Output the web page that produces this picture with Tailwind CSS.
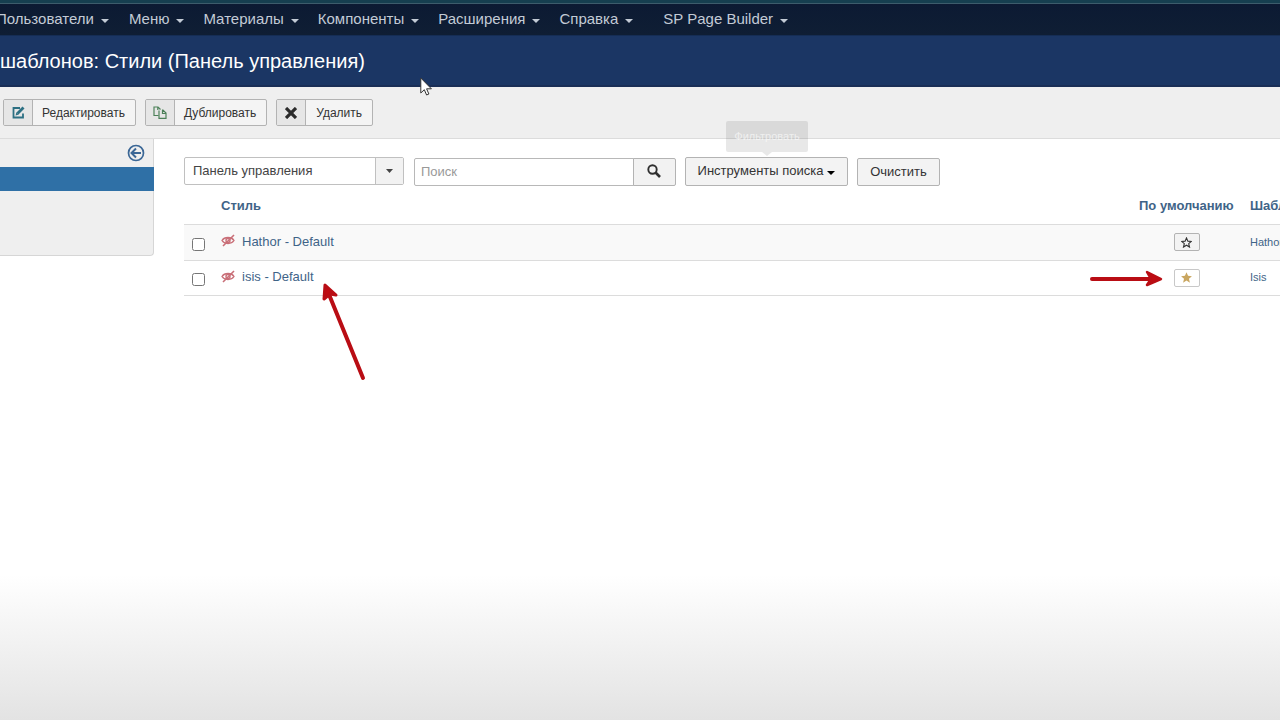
<!DOCTYPE html>
<html lang="ru">

<head>
  <meta charset="UTF-8">
  <meta name="viewport" content="width=device-width, initial-scale=1.0">
  <title>Менеджер шаблонов: Стили (Панель управления)</title>
  <script src="https://cdn.jsdelivr.net/npm/@tailwindcss/browser@4"></script>
</head>

<body class="relative flex min-h-screen flex-col overflow-hidden bg-white font-['Liberation_Sans',Arial,sans-serif] text-[13px] text-[#333]">
  <!-- Top menu -->
  <div class="h-1 border-b border-[#3d5c6c] bg-[#163f50]"></div>
  <nav class="flex h-[31px] items-center bg-linear-to-b from-[#0c1a33] to-[#0f1e34] pb-px text-[15px] whitespace-nowrap text-[#c3cbd6]">
    <a href="#" class="-ml-1 flex items-center gap-[7px]">Пользователи
      <svg class="mt-1 h-1 w-2 fill-current" viewBox="0 0 8 4"><path d="M0 0h8L4 4z" /></svg></a>
    <a href="#" class="ml-5 flex items-center gap-[7px]">Меню
      <svg class="mt-1 h-1 w-2 fill-current" viewBox="0 0 8 4"><path d="M0 0h8L4 4z" /></svg></a>
    <a href="#" class="ml-[19px] flex items-center gap-[7px]">Материалы
      <svg class="mt-1 h-1 w-2 fill-current" viewBox="0 0 8 4"><path d="M0 0h8L4 4z" /></svg></a>
    <a href="#" class="ml-[19px] flex items-center gap-[7px]">Компоненты
      <svg class="mt-1 h-1 w-2 fill-current" viewBox="0 0 8 4"><path d="M0 0h8L4 4z" /></svg></a>
    <a href="#" class="ml-[19px] flex items-center gap-[7px]">Расширения
      <svg class="mt-1 h-1 w-2 fill-current" viewBox="0 0 8 4"><path d="M0 0h8L4 4z" /></svg></a>
    <a href="#" class="ml-[19px] flex items-center gap-[7px]">Справка
      <svg class="mt-1 h-1 w-2 fill-current" viewBox="0 0 8 4"><path d="M0 0h8L4 4z" /></svg></a>
    <a href="#" class="ml-[30px] flex items-center gap-[7px]">SP Page Builder
      <svg class="mt-1 h-1 w-2 fill-current" viewBox="0 0 8 4"><path d="M0 0h8L4 4z" /></svg></a>
  </nav>

  <!-- Page title -->
  <header class="flex h-[52px] items-center border-t border-b-2 border-t-[#152d54] border-b-[#1a2e56] bg-[#1b3664]">
    <h1 class="text-[20px] whitespace-nowrap text-white">шаблонов: Стили (Панель управления)</h1>
  </header>

  <!-- Toolbar -->
  <div class="flex h-[52px] items-center gap-[9px] border-b border-[#dcdcdc] bg-[#efefef] pl-[3px] text-[12px]">
    <button class="flex h-[27px] items-center overflow-hidden rounded-xs border border-[#b3b3b3] bg-[#f4f4f4]">
      <span class="flex h-full w-[29px] items-center justify-center border-r border-[#b3b3b3] bg-[#e6e6e6]">
        <svg class="h-[13px] w-[13px]" viewBox="0 0 13 13" fill="none" stroke="#2d7083" stroke-width="1.800"><path d="M8 2H1.500v9.500h9.500V7.500" /><path d="M5.500 7.500L11.500 1.500" stroke-width="2.800" /><path d="M3.600 9.400l.8-3.200 2.400 2.400z" fill="#2d7083" stroke="none" /></svg>
      </span>
      <span class="pr-[10px] pl-[9px]">Редактировать</span>
    </button>
    <button class="flex h-[27px] items-center overflow-hidden rounded-xs border border-[#b3b3b3] bg-[#f4f4f4]">
      <span class="flex h-full w-[29px] items-center justify-center border-r border-[#b3b3b3] bg-[#e6e6e6]">
        <svg class="h-[13px] w-[14px]" viewBox="0 0 14 13" fill="none" stroke="#4d8159" stroke-width="1.200"><path d="M5.500 9.500H1V1h4l2.500 2.500M4.800 1v3" /><path d="M9 4h1l3 3v5.300H6V4.500M9.500 4v3.500H13" /></svg>
      </span>
      <span class="pr-[10px] pl-[9px]">Дублировать</span>
    </button>
    <button class="flex h-[27px] items-center overflow-hidden rounded-xs border border-[#b3b3b3] bg-[#f4f4f4]">
      <span class="flex h-full w-[29px] items-center justify-center border-r border-[#b3b3b3] bg-[#e6e6e6]">
        <svg class="h-3 w-3" viewBox="0 0 12 12" stroke="#2b2b2b" stroke-width="3.200"><path d="M1 1l10 10M11 1L1 11" /></svg>
      </span>
      <span class="px-[10px]">Удалить</span>
    </button>
  </div>

  <div class="flex flex-1 items-start bg-linear-to-b from-white from-75% to-[#e3e3e3]">
    <!-- Sidebar -->
    <aside class="h-[117px] w-[154px] shrink-0 rounded-br-sm border-r border-b border-[#d6d6d6] bg-[#efefef]">
      <button aria-label="Скрыть панель" class="mr-2 ml-auto flex h-7 items-center">
        <svg class="h-[18px] w-[18px]" viewBox="0 0 18 18" fill="none" stroke="#3b6796" stroke-width="1.700"><circle cx="9" cy="9" r="7.500" /><path d="M14 9H5M9 4.500L4.500 9 9 13.500" stroke-width="2" /></svg>
      </button>
      <div class="-mr-px h-6 bg-[#2f70a6]"></div>
    </aside>

    <main class="ml-[30px] min-w-0 flex-1 pt-[18px]">
      <!-- Filters -->
      <div class="flex h-[29px] items-end text-[13px]">
        <div class="relative mb-px h-7 w-[220px]">
          <select aria-label="Клиент" class="h-full w-full appearance-none rounded-xs border border-[#c0c0c0] bg-white pl-2 text-[#444]">
            <option>Панель управления</option>
          </select>
          <span class="pointer-events-none absolute inset-y-px right-px flex w-7 items-center justify-center border-l border-[#c0c0c0] bg-[#f2f2f2]">
            <svg class="h-1 w-[7px] fill-[#444]" viewBox="0 0 7 4"><path d="M0 0h7L3.500 4z" /></svg>
          </span>
        </div>
        <form class="ml-[10px] flex h-7">
          <input type="text" aria-label="Поиск" placeholder="Поиск" class="w-[220px] rounded-l-xs border border-[#b8b8b8] bg-white px-[6px] placeholder:text-[#999]">
          <button type="button" aria-label="Искать" class="-ml-px flex w-[43px] items-center justify-center rounded-r-xs border border-[#b3b3b3] bg-[#f2f2f2] pr-[2px] pb-[3px]">
            <svg class="h-[14px] w-[14px]" viewBox="0 0 14 14" fill="none" stroke="#2f2f2f"><circle cx="5.500" cy="5.500" r="4.200" stroke-width="1.900" /><path d="M8.500 8.500L13 13" stroke-width="2.600" /></svg>
          </button>
        </form>
        <div class="relative ml-[9px]">
          <button class="flex h-[29px] w-[163px] items-center justify-center gap-1 rounded-xs border border-[#b3b3b3] bg-[#f3f3f3] pb-px whitespace-nowrap">Инструменты поиска
            <svg class="mt-[3px] h-1 w-2 fill-black" viewBox="0 0 8 4"><path d="M0 0h8L4 4z" /></svg>
          </button>
          <div role="tooltip" class="absolute bottom-[34px] left-[41px] flex h-[31px] w-[82px] items-center justify-center rounded-xs bg-black/9 text-[11px] text-white/60">Фильтровать
            <svg class="absolute top-full left-1/2 -ml-[5px] h-1 w-[10px] fill-black/9" viewBox="0 0 10 4"><path d="M0 0h10L5 4z" /></svg>
          </div>
        </div>
        <button class="ml-[9px] h-7 w-[83px] rounded-xs border border-[#b3b3b3] bg-[#f3f3f3] pb-px">Очистить</button>
      </div>

      <!-- Template styles -->
      <table class="mt-[2px] w-full table-fixed text-left whitespace-nowrap text-[#3f6488]">
        <thead>
          <tr class="h-9 border-b border-[#dcdcdc]">
            <th class="w-[37px]"></th>
            <th class="font-bold">Стиль</th>
            <th class="w-[111px] font-bold">По умолчанию</th>
            <th class="w-[30px] font-bold">Шаблон</th>
          </tr>
        </thead>
        <tbody>
          <tr class="h-9 border-b border-[#dcdcdc] bg-[#f9f9f9]">
            <td class="pt-1 pl-2"><input type="checkbox" aria-label="Hathor - Default" class="block h-[13px] w-[13px]"></td>
            <td>
              <div class="flex items-center gap-[7px] pb-px">
                <svg class="mb-[2px] h-[13px] w-[14px]" viewBox="0 0 14 13" fill="none" stroke="#c96f78" stroke-width="1.400"><path d="M1 6.500C3.500 2.500 10.500 2.500 13 6.500 10.500 10.500 3.500 10.500 1 6.500z" /><circle cx="7" cy="6.500" r="2" /><path d="M2 12L13 1" stroke-width="1.600" /></svg>
                <a href="#">Hathor - Default</a>
              </div>
            </td>
            <td>
              <button aria-label="Сделать по умолчанию" class="ml-[35px] flex h-[18px] w-[26px] items-center justify-center rounded-xs border border-[#b3b3b3] bg-[#f3f3f3] pr-[2px]">
                <svg class="h-[11px] w-[11px]" viewBox="0 0 12 12" fill="none" stroke="#333" stroke-width="1.200"><path d="M6 1l1.500 3.500 3.800.3-2.900 2.500.9 3.700L6 9l-3.300 2 .9-3.700L.7 4.800l3.800-.3z" /></svg>
              </button>
            </td>
            <td class="text-[11px]"><a href="#">Hathor</a></td>
          </tr>
          <tr class="h-[35px] border-b border-[#dcdcdc]">
            <td class="pt-1 pl-2"><input type="checkbox" aria-label="isis - Default" class="block h-[13px] w-[13px]"></td>
            <td>
              <div class="flex items-center gap-[7px] pb-px">
                <svg class="mb-[2px] h-[13px] w-[14px]" viewBox="0 0 14 13" fill="none" stroke="#c96f78" stroke-width="1.400"><path d="M1 6.500C3.500 2.500 10.500 2.500 13 6.500 10.500 10.500 3.500 10.500 1 6.500z" /><circle cx="7" cy="6.500" r="2" /><path d="M2 12L13 1" stroke-width="1.600" /></svg>
                <div class="relative">
                  <a href="#">isis - Default</a>
                  <svg class="absolute top-4 left-[78px] h-[100px] w-[48px]" viewBox="0 0 48 100" fill="none" stroke="#b90d14" stroke-linecap="round"><path d="M43 95L8 9" stroke-width="4" /><path d="M5 2L4 16l6-5 6 1z" fill="#c00b12" stroke-width="3" stroke-linejoin="round" /></svg>
                </div>
              </div>
            </td>
            <td>
              <div class="relative">
                <svg class="absolute top-0 -left-[49px] h-[18px] w-[76px]" viewBox="0 0 76 18" fill="none" stroke="#b90d14" stroke-linecap="round" stroke-linejoin="round"><path d="M2 10h64" stroke-width="4" /><path d="M57 3l14 7-14 6 4-6z" fill="#c00b12" stroke-width="2.500" /></svg>
                <button aria-label="По умолчанию" class="ml-[35px] flex h-[18px] w-[26px] items-center justify-center rounded-xs border border-[#c8c8c8] bg-white pr-[2px]">
                  <svg class="h-[11px] w-[11px] fill-[#c9a660]" viewBox="0 0 12 12"><path d="M6 .3l1.700 3.900 4.200.4-3.200 2.800 1 4.200L6 9.400l-3.700 2.200 1-4.200L.1 4.600l4.200-.4z" /></svg>
                </button>
              </div>
            </td>
            <td class="text-[11px]"><a href="#">Isis</a></td>
          </tr>
        </tbody>
      </table>
    </main>
  </div>

  <!-- Mouse pointer -->
  <svg class="pointer-events-none absolute top-[77px] left-[420px] h-[19px] w-3" viewBox="0 0 12 19" fill="#fff" stroke="#333" stroke-width="1"><path d="M.8 1v15l3.500-3.300 2.300 5.300 2.300-1-2.300-5.200h4.800z" /></svg>
</body>

</html>
